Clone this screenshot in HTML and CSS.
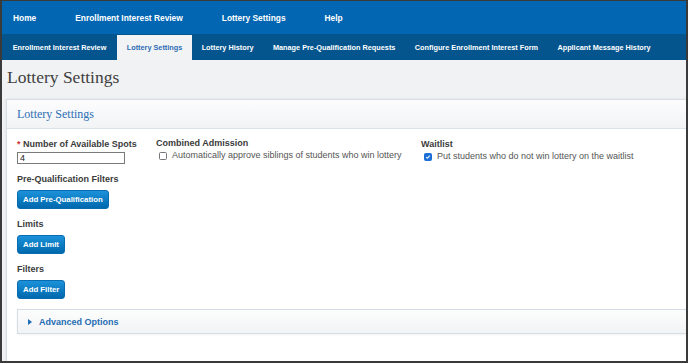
FILE: index.html
```html
<!DOCTYPE html>
<html lang="en">
<head>
    <meta charset="UTF-8">
    <meta name="viewport" content="width=device-width, initial-scale=1.0">
    <title>Lottery Settings</title>
    <link rel="stylesheet" href="styles.css">
</head>
<body>

    <div class="marco">
        <div class="menu-principal">
            <a href="#">Home</a>
            <a href="#">Enrollment Interest Review</a>
            <a href="#">Lottery Settings</a>
            <a href="#">Help</a>
        </div>

        <div class="submenu">
            <a href="#">Enrollment Interest Review</a>
            <a href="#" class="activo">Lottery Settings</a>
            <a href="#">Lottery History</a>
            <a href="#">Manage Pre-Qualification Requests</a>
            <a href="#">Configure Enrollment Interest Form</a>
            <a href="#">Applicant Message History</a>
        </div>

        <div class="contenido">
            <h1 class="titulo">Lottery Settings</h1>

            <div class="panel">
                <div class="panel-cabecera">Lottery Settings</div>

                <div class="panel-cuerpo">
                    <div class="fila">
                        <div class="col col-spots">
                            <div class="etiqueta"><span class="requerido">*</span> Number of Available Spots</div>
                            <input type="text" class="campo" value="4">
                        </div>
                        <div class="col col-combined">
                            <div class="etiqueta">Combined Admission</div>
                            <label class="opcion">
                                <span class="casilla"></span>
                                Automatically approve siblings of students who win lottery
                            </label>
                        </div>
                        <div class="col">
                            <div class="etiqueta">Waitlist</div>
                            <label class="opcion">
                                <span class="casilla marcada">
                                    <svg width="8" height="8" viewBox="0 0 8 8"><path d="M1.6 4.2 L3.2 5.8 L6.4 2.2" fill="none" stroke="#fff" stroke-width="1.4"/></svg>
                                </span>
                                Put students who do not win lottery on the waitlist
                            </label>
                        </div>
                    </div>

                    <div class="seccion">
                        <div class="etiqueta">Pre-Qualification Filters</div>
                        <button class="boton">Add Pre-Qualification</button>
                    </div>

                    <div class="seccion">
                        <div class="etiqueta">Limits</div>
                        <button class="boton">Add Limit</button>
                    </div>

                    <div class="seccion">
                        <div class="etiqueta">Filters</div>
                        <button class="boton">Add Filter</button>
                    </div>

                    <div class="avanzado">
                        <span class="flecha"></span>
                        Advanced Options
                    </div>
                </div>
            </div>
        </div>
    </div>

</body>
</html>
```

FILE: styles.css
```css
body {
    margin: 0;
    font-family: "Liberation Sans", Arial, sans-serif;
    background-color: #ffffff;
}

.marco {
    width: 688px;
    height: 363px;
    box-sizing: border-box;
    border: 2px solid #3a3a3a;
    border-top-width: 1px;
    overflow: hidden;
    background-color: #f1f2f4;
}

/* Barra azul superior */
.menu-principal {
    height: 33px;
    background-color: #0266b2;
    display: flex;
    align-items: center;
    gap: 39px;
    padding-left: 11px;
}

.menu-principal a {
    color: #ffffff;
    text-decoration: none;
    font-size: 8.4px;
    font-weight: bold;
}

.submenu {
    height: 26px;
    box-sizing: border-box;
    padding: 1px 0 0 1px;
    background-color: #04558e;
    display: flex;
}

.submenu a {
    display: flex;
    align-items: center;
    padding: 0 9.7px;
    color: #ffffff;
    text-decoration: none;
    font-size: 7.3px;
    font-weight: bold;
}

.submenu a.activo {
    margin-left: 1px;
    background-color: #f2f3f5;
    color: #2e6db4;
}

.contenido {
    padding: 0 0 0 4px;
}

.titulo {
    margin: 7px 0 12px 1px;
    font-family: "Liberation Serif", serif;
    font-weight: normal;
    font-size: 17.5px;
    line-height: 20px;
    color: #404040;
}

.panel {
    margin-right: -60px;
    background-color: #ffffff;
    border: 1px solid #d6dde5;
    box-shadow: 0 0 3px rgba(0, 0, 0, 0.08);
}

.panel-cabecera {
    height: 29px;
    box-sizing: border-box;
    padding-left: 10px;
    display: flex;
    align-items: center;
    font-family: "Liberation Serif", serif;
    font-size: 12px;
    color: #2f6fb5;
    background: linear-gradient(#fdfdfe, #f1f3f5);
    border-bottom: 1px solid #d9e1ea;
}

.panel-cuerpo {
    padding: 10px 10px 40px 10px;
}

.fila {
    display: flex;
}

.col-spots {
    width: 139px;
}

.col-combined {
    width: 265px;
    margin-top: -1px;
}

.etiqueta {
    font-size: 9px;
    line-height: 11px;
    font-weight: bold;
    color: #3b3b3b;
}

.requerido {
    color: #d0312d;
}

.campo {
    display: block;
    width: 108px;
    height: 12px;
    box-sizing: border-box;
    margin-top: 2px;
    padding: 0 2px;
    border: 1px solid #7a7a7a;
    font-family: "Liberation Sans", Arial, sans-serif;
    font-size: 9px;
    color: #222222;
}

.opcion {
    display: flex;
    align-items: center;
    gap: 5px;
    margin-top: 1px;
    padding-left: 3px;
    font-size: 9px;
    line-height: 11px;
    color: #555555;
}

.casilla {
    width: 8px;
    height: 8px;
    box-sizing: border-box;
    border: 1px solid #767676;
    border-radius: 1.5px;
    background-color: #ffffff;
    display: flex;
    align-items: center;
    justify-content: center;
}

.casilla.marcada {
    background-color: #1b6fd6;
    border-color: #1b6fd6;
}

.seccion {
    margin-top: 10px;
}

.boton {
    display: block;
    height: 19px;
    margin-top: 5px;
    padding: 0 5px;
    border: 1px solid #0a6cb0;
    border-radius: 3px;
    background: linear-gradient(#1c92da, #0068ad);
    color: #ffffff;
    font-family: "Liberation Sans", Arial, sans-serif;
    font-size: 7.8px;
    font-weight: bold;
    cursor: pointer;
}

.avanzado {
    margin-top: 10px;
    height: 25px;
    box-sizing: border-box;
    display: flex;
    align-items: center;
    padding-left: 10px;
    border: 1px solid #d4dde6;
    background: linear-gradient(#fdfdfd, #f2f3f5);
    box-shadow: 0 1px 2px rgba(0, 0, 0, 0.05);
    font-size: 9px;
    font-weight: bold;
    color: #1f6db5;
}

.flecha {
    width: 0;
    height: 0;
    margin-right: 7px;
    border-top: 3px solid transparent;
    border-bottom: 3px solid transparent;
    border-left: 4px solid #1f6db5;
}
```
